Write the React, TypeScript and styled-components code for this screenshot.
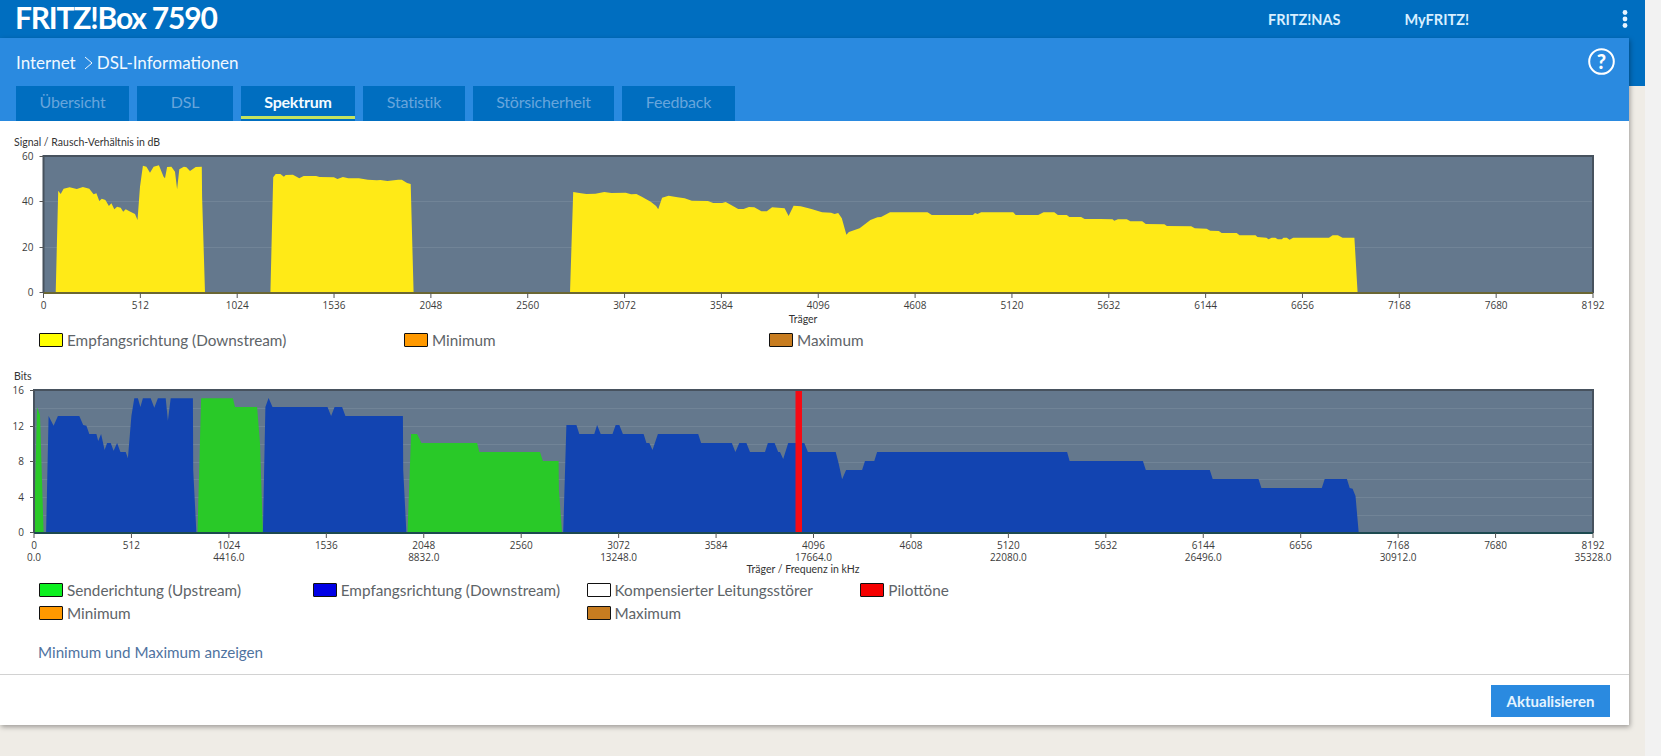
import React from "react";
import styled, { createGlobalStyle } from "styled-components";

const Global = createGlobalStyle`
  html, body { margin: 0; padding: 0; background: #f2f2f2; overflow: hidden; }
  body { font-family: "Lato", "Open Sans", sans-serif; }
`;

type Pt = [number, number];

const fromZoom = (pts: Pt[], x0: number, fx: number, y0: number): Pt[] =>
  pts.map(([x, y]) => [x0 + x / fx, y0 + y / 3]);

const toPoints = (pts: Pt[]) => pts.map(([x, y]) => `${x.toFixed(1)},${y.toFixed(1)}`).join(" ");

const snrA = fromZoom(
  [[156,488],[163,182],[170,192],[178,176],[195,172],[215,177],[232,171],[250,176],[262,193],[270,190],[278,213],[285,206],[295,210],[305,228],[312,220],[320,238],[328,230],[338,233],[345,245],[352,238],[365,245],[378,252],[385,270],[392,170],[400,107],[410,110],[420,128],[430,110],[445,106],[458,140],[462,145],[468,111],[480,110],[490,125],[496,178],[502,118],[515,110],[522,112],[532,123],[548,111],[565,110],[566,200],[574,488]],
  0, 2.8, 130
);
const snrB = fromZoom(
  [[757,488],[765,142],[772,132],[785,132],[795,140],[800,135],[820,134],[838,145],[850,138],[885,138],[895,141],[935,142],[945,147],[960,141],[975,145],[1005,145],[1030,149],[1055,151],[1065,150],[1085,153],[1115,149],[1125,149],[1140,159],[1150,162],[1158,488]],
  0, 2.8, 130
);
const snrC = [
  ...fromZoom(
    [[84,488],[93,186],[110,189],[130,192],[155,191],[180,186],[200,189],[240,188],[255,193],[270,192],[285,200],[310,215],[325,228],[331,238],[342,203],[360,197],[385,202],[405,205],[425,212],[470,213],[485,219],[510,219],[520,216],[535,225],[555,237],[570,237],[585,231],[600,232],[620,244],[635,244],[650,232],[685,235],[696,258],[710,227],[730,229],[760,237],[790,247],[815,248],[825,252],[835,249],[845,265],[858,314],[865,306],[895,295],[925,270],[945,262],[955,261],[980,247],[1085,247],[1097,255],[1212,255],[1218,249],[1225,252],[1235,247],[1325,247],[1332,255],[1395,255],[1410,247],[1440,247],[1450,255],[1475,255],[1482,261],[1515,261],[1525,267],[1568,267]],
    540, 2.8, 130
  ),
  ...fromZoom(
    [[35,268],[40,272],[50,268],[75,268],[85,274],[118,274],[128,282],[180,283],[187,288],[255,289],[265,295],[298,296],[308,302],[332,303],[340,309],[382,309],[390,316],[435,316],[440,321],[465,323],[471,328],[480,323],[490,323],[497,328],[508,328],[513,323],[522,323],[530,329],[540,323],[640,323],[650,316],[665,316],[678,323],[711,323],[720,488]],
    1100, 2.795, 130
  ),
];

const greenA = fromZoom([[95,518],[104,142],[112,165],[122,518]], 0, 2.8, 360);
const blueA = fromZoom(
  [[129,518],[136,168],[150,197],[162,168],[222,168],[233,195],[242,197],[250,222],[270,222],[275,243],[283,222],[293,270],[300,249],[310,249],[318,272],[328,249],[337,276],[352,276],[358,295],[368,168],[376,115],[386,115],[393,141],[400,115],[422,115],[432,143],[442,115],[464,115],[470,182],[478,115],[540,115],[541,330],[550,518]],
  0, 2.8, 360
);
const greenB = fromZoom([[553,518],[563,115],[652,115],[658,141],[720,141],[728,250],[736,518]], 0, 2.8, 360);
const blueB = fromZoom(
  [[736,518],[743,141],[752,114],[763,141],[917,141],[927,168],[937,141],[958,141],[967,168],[1128,168],[1129,330],[1138,518]],
  0, 2.8, 360
);
const greenC = [
  ...fromZoom([[1141,518],[1151,222],[1168,222],[1180,249],[1336,249],[1342,276],[1512,276],[1520,303]], 0, 2.8, 360),
  ...fromZoom([[52,303],[53,390],[62,518]], 540, 2.8, 360),
];
const blueC = [
  ...fromZoom(
    [[65,518],[74,195],[102,195],[110,222],[152,222],[160,195],[170,222],[203,222],[212,195],[222,195],[232,222],[290,222],[298,249],[306,249],[315,270],[330,222],[443,222],[451,249],[537,249],[547,276],[558,249],[578,249],[588,276],[630,276],[638,249],[657,249],[667,276],[672,276],[681,297],[695,249],[740,249],[750,276],[828,276],[836,310],[846,358],[857,330],[902,330],[910,303],[936,303],[944,276],[1476,276],[1483,303],[1568,303]],
    540, 2.8, 360
  ),
  ...fromZoom(
    [[120,303],[128,330],[307,330],[315,357],[443,357],[451,384],[620,384],[628,357],[690,357],[698,384],[706,386],[714,408],[723,518]],
    1100, 2.795, 360
  ),
];

const CARRIERS = Array.from({ length: 17 }, (_, i) => i * 512);
const FREQS: Record<number, string> = {
  0: "0.0", 1024: "4416.0", 2048: "8832.0", 3072: "13248.0", 4096: "17664.0",
  5120: "22080.0", 6144: "26496.0", 7168: "30912.0", 8192: "35328.0",
};

const Frame = styled.div`
  width: 1645px;
  height: 756px;
  background: linear-gradient(#006ec0 86px, #efece6 86px);
`;

const TopBar = styled.header`
  height: 38px;
  display: flex;
  align-items: center;
  padding: 0 17px 0 15px;
  box-sizing: border-box;
`;

const Brand = styled.div`
  font-size: 30px;
  font-weight: 700;
  letter-spacing: -1.2px;
  color: #fff;
  line-height: 34px;
  height: 38px;
`;

const TopNav = styled.nav`
  margin-left: auto;
  display: flex;
  gap: 64px;
`;

const TopLink = styled.a`
  font-size: 14.5px;
  font-weight: 700;
  color: #d8efff;
`;

const Dots = styled.svg`
  margin-left: 153px;
  width: 6px;
  height: 18px;
`;

const Panel = styled.main`
  width: 1629px;
  height: 687px;
  display: flex;
  flex-direction: column;
  background: #fff;
  box-shadow: 1px 2px 5px rgba(0, 0, 0, 0.35);
`;

const PageHead = styled.div`
  height: 83px;
  background: #2a8ae0;
  display: flex;
  flex-direction: column;
  justify-content: flex-end;
  position: relative;
`;

const Crumbs = styled.div`
  position: absolute;
  left: 16px;
  top: 15px;
  display: flex;
  align-items: center;
  font-size: 17px;
  line-height: 20px;
  color: #f0f8ff;
`;

const CrumbArrow = styled.svg`
  width: 9px;
  height: 14px;
  margin: 0 4px 0 8px;
`;

const Help = styled.svg`
  position: absolute;
  left: 1588px;
  top: 10px;
  width: 27px;
  height: 27px;
`;

const HelpMark = styled.text`
  font-family: "Lato", sans-serif;
  font-size: 20px;
  font-weight: 900;
  fill: #fff;
  text-anchor: middle;
`;

const Tabs = styled.div`
  display: flex;
  gap: 8px;
  padding-left: 16px;
`;

const Tab = styled.div<{ $w: number; $active?: boolean }>`
  position: relative;
  width: ${(p) => p.$w}px;
  height: 35px;
  background: #006ec0;
  display: flex;
  align-items: center;
  justify-content: center;
  font-size: 16px;
  font-weight: ${(p) => (p.$active ? 700 : 400)};
  letter-spacing: -0.2px;
  color: ${(p) => (p.$active ? "#f4fbff" : "#67a5dc")};
  padding-bottom: 4px;
  box-sizing: border-box;
  ${(p) =>
    p.$active &&
    `&::after {
      content: "";
      position: absolute;
      left: 0;
      right: 0;
      bottom: 2px;
      height: 3px;
      background: #c4e35f;
    }`}
`;

const Content = styled.section`
  flex: 1;
  padding-top: 15px;
  display: flex;
  flex-direction: column;
`;

const ChartTitle = styled.div<{ $gap?: number }>`
  margin: ${(p) => p.$gap ?? 0}px 0 0 14px;
  font-size: 10.5px;
  line-height: 12px;
  color: #333;
  height: 12px;
`;

const ChartSvg = styled.svg`
  display: block;
  width: 1629px;
  flex: none;
`;

const PlotBg = styled.rect`
  fill: #64788d;
`;

const Grid = styled.line`
  stroke: #718497;
  stroke-width: 1;
`;

const Frameline = styled.path`
  fill: none;
  stroke: #47525e;
  stroke-width: 2;
`;

const BaseLine = styled.line<{ $c: string }>`
  stroke: ${(p) => p.$c};
  stroke-width: 2;
`;

const Tick = styled.line`
  stroke: #555;
  stroke-width: 1;
`;

const TickText = styled.text<{ $end?: boolean }>`
  font-family: "Open Sans", sans-serif;
  font-size: 10px;
  fill: #3c3c3c;
  text-anchor: ${(p) => (p.$end ? "end" : "middle")};
`;

const AxisTitle = styled.text`
  font-family: "Lato", sans-serif;
  font-size: 10.5px;
  fill: #333;
  text-anchor: middle;
`;

const Fill = styled.polygon<{ $c: string }>`
  fill: ${(p) => p.$c};
`;

const Pilot = styled.rect`
  fill: #f60a14;
`;

const Legend = styled.div<{ $cols: number; $top: number }>`
  margin: ${(p) => p.$top}px 0 0 39px;
  width: 1095px;
  display: grid;
  grid-template-columns: repeat(${(p) => p.$cols}, 1fr);
`;

const LegendItem = styled.div<{ $col?: number }>`
  height: 23px;
  display: flex;
  align-items: center;
  gap: 4px;
  font-size: 15.3px;
  color: #5e6468;
  white-space: nowrap;
  ${(p) => (p.$col ? `grid-column: ${p.$col};` : "")}
`;

const Swatch = styled.span<{ $c: string }>`
  width: 24px;
  height: 14px;
  box-sizing: border-box;
  flex: none;
  border: 1px solid #111;
  border-radius: 1px;
  background: ${(p) => p.$c};
`;

const ShowLink = styled.a`
  margin: 18px 0 0 38px;
  font-size: 15.2px;
  line-height: 20px;
  color: #4f739f;
`;

const Footer = styled.footer`
  height: 51px;
  box-sizing: border-box;
  border-top: 1px solid #d2d2d2;
  display: flex;
  justify-content: flex-end;
  align-items: flex-start;
  padding: 10px 19px 0 0;
`;

const Refresh = styled.button`
  width: 119px;
  height: 32px;
  border: 0;
  background: #2a8ae0;
  color: #e4f4ff;
  font-family: inherit;
  font-size: 15px;
  font-weight: 700;
  padding: 0;
`;

type PlotProps = {
  left: number;
  top: number;
  bottom: number;
  base: string;
  gridYs: number[];
  yLabels: [string, number][];
  svgTop: number;
  svgHeight: number;
  title: string;
  titleY: number;
  freq?: boolean;
  children: React.ReactNode;
};

const RIGHT = 1593;

function Plot({ left, top, bottom, base, gridYs, yLabels, svgTop, svgHeight, title, titleY, freq, children }: PlotProps) {
  const xOf = (c: number) => left + (c / 8192) * (RIGHT - left);
  return (
    <ChartSvg viewBox={`0 ${svgTop} 1629 ${svgHeight}`} height={svgHeight}>
      <PlotBg x={left} y={top} width={RIGHT - left} height={bottom - top} />
      {gridYs.map((y) => (
        <Grid key={y} x1={left} x2={RIGHT} y1={y + 0.5} y2={y + 0.5} />
      ))}
      {children}
      <Frameline d={`M${left} ${bottom} V${top} H${RIGHT} V${bottom}`} />
      <BaseLine $c={base} x1={left} x2={RIGHT} y1={bottom} y2={bottom} />
      {yLabels.map(([t, y]) => (
        <g key={t}>
          <Tick x1={left - 4} x2={left} y1={y + 0.5} y2={y + 0.5} />
          <TickText $end x={left - 10} y={y + 4}>{t}</TickText>
        </g>
      ))}
      {CARRIERS.map((c) => (
        <g key={c}>
          <Tick x1={xOf(c)} x2={xOf(c)} y1={bottom} y2={bottom + 5} />
          <TickText x={xOf(c)} y={bottom + 16}>{c}</TickText>
          {freq && FREQS[c] && <TickText x={xOf(c)} y={bottom + 28}>{FREQS[c]}</TickText>}
        </g>
      ))}
      <AxisTitle x={803} y={titleY}>{title}</AxisTitle>
    </ChartSvg>
  );
}

const TABS: [string, number][] = [
  ["Übersicht", 113], ["DSL", 96], ["Spektrum", 114], ["Statistik", 102], ["Störsicherheit", 141], ["Feedback", 113],
];

export default function App() {
  const bitGrid = [1, 2, 3, 4, 5, 6, 7].map((k) => Math.round(533 - (k * 143) / 8));
  return (
    <Frame>
      <Global />
      <TopBar>
        <Brand>FRITZ!Box 7590</Brand>
        <TopNav>
          <TopLink>FRITZ!NAS</TopLink>
          <TopLink>MyFRITZ!</TopLink>
        </TopNav>
        <Dots viewBox="0 0 6 18">
          <circle cx="3" cy="2.5" r="2.4" fill="#e8f4ff" />
          <circle cx="3" cy="9" r="2.4" fill="#e8f4ff" />
          <circle cx="3" cy="15.5" r="2.4" fill="#e8f4ff" />
        </Dots>
      </TopBar>
      <Panel>
        <PageHead>
          <Crumbs>
            Internet
            <CrumbArrow viewBox="0 0 9 14">
              <path d="M1 1 L8 7 L1 13" fill="none" stroke="#f0f8ff" strokeWidth="1" />
            </CrumbArrow>
            DSL-Informationen
          </Crumbs>
          <Help viewBox="0 0 27 27">
            <circle cx="13.5" cy="13.5" r="12.3" fill="none" stroke="#fff" strokeWidth="2" />
            <HelpMark x="13.5" y="20.5">?</HelpMark>
          </Help>
          <Tabs>
            {TABS.map(([t, w]) => (
              <Tab key={t} $w={w} $active={t === "Spektrum"}>{t}</Tab>
            ))}
          </Tabs>
        </PageHead>
        <Content>
          <ChartTitle>Signal / Rausch-Verhältnis in dB</ChartTitle>
          <Plot
            left={43.5}
            top={156}
            bottom={293}
            base="#6b6733"
            gridYs={[201, 247]}
            yLabels={[["60", 156], ["40", 201], ["20", 247], ["0", 292]]}
            svgTop={148}
            svgHeight={178}
            title="Träger"
            titleY={323}
          >
            <Fill $c="#ffea17" points={toPoints(snrA)} />
            <Fill $c="#ffea17" points={toPoints(snrB)} />
            <Fill $c="#ffea17" points={toPoints(snrC)} />
          </Plot>
          <Legend $cols={3} $top={2}>
            <LegendItem><Swatch $c="#ffff00" />Empfangsrichtung (Downstream)</LegendItem>
            <LegendItem><Swatch $c="#ff9900" />Minimum</LegendItem>
            <LegendItem><Swatch $c="#c77c20" />Maximum</LegendItem>
          </Legend>
          <ChartTitle $gap={19}>Bits</ChartTitle>
          <Plot
            left={34}
            top={390}
            bottom={533}
            base="#1d4a50"
            gridYs={bitGrid}
            yLabels={[["16", 390], ["12", 426], ["8", 461], ["4", 497], ["0", 532]]}
            svgTop={382}
            svgHeight={193}
            title="Träger / Frequenz in kHz"
            titleY={573}
            freq
          >
            <Fill $c="#29c928" points={toPoints(greenA)} />
            <Fill $c="#1244b1" points={toPoints(blueA)} />
            <Fill $c="#29c928" points={toPoints(greenB)} />
            <Fill $c="#1244b1" points={toPoints(blueB)} />
            <Fill $c="#29c928" points={toPoints(greenC)} />
            <Fill $c="#1244b1" points={toPoints(blueC)} />
            <Pilot x={795.5} y={390} width={6.5} height={143} />
          </Plot>
          <Legend $cols={4} $top={3}>
            <LegendItem><Swatch $c="#0cf020" />Senderichtung (Upstream)</LegendItem>
            <LegendItem><Swatch $c="#0000e6" />Empfangsrichtung (Downstream)</LegendItem>
            <LegendItem><Swatch $c="#ffffff" />Kompensierter Leitungsstörer</LegendItem>
            <LegendItem><Swatch $c="#f60000" />Pilottöne</LegendItem>
            <LegendItem><Swatch $c="#ff9900" />Minimum</LegendItem>
            <LegendItem $col={3}><Swatch $c="#c77c20" />Maximum</LegendItem>
          </Legend>
          <ShowLink>Minimum und Maximum anzeigen</ShowLink>
        </Content>
        <Footer>
          <Refresh>Aktualisieren</Refresh>
        </Footer>
      </Panel>
    </Frame>
  );
}
